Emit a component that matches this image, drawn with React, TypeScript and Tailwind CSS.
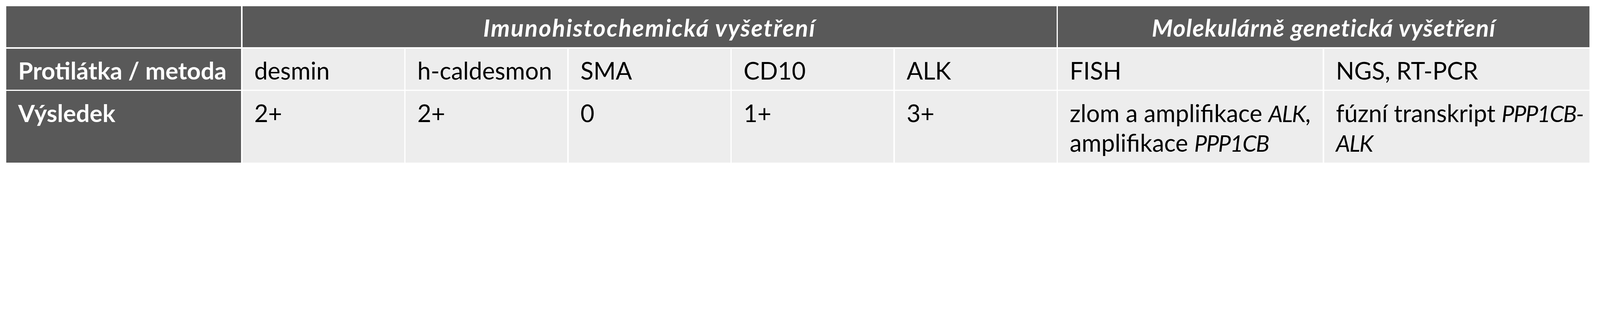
const headCell = "bg-[#595959] text-white font-bold italic text-center pt-[17px] whitespace-nowrap";
const labelCell = "bg-[#595959] text-white font-bold pl-[30px] pt-[18.4px] whitespace-nowrap";
const cell = "bg-[#ededed] text-black pl-[30px] pt-[18.4px] whitespace-nowrap";
// gene names are set in a narrower italic
const gene = "italic text-[58px] tracking-[-2px]";

const antibodies = ["desmin", "h-caldesmon", "SMA", "CD10", "ALK"];
const results = ["2+", "2+", "0", "1+", "3+"];

export default function App() {
  return (
    <div className="bg-white pl-[16.4px] pt-[16.4px] pb-[6px]">
      <div className="grid w-[4053px] grid-cols-[601px_414px_414px_414px_414px_414px_678px_679.5px] grid-rows-[105px_105.5px_184px] gap-x-[3.5px] gap-y-[3.2px] font-['Lato',sans-serif] text-[61.5px] leading-[74.7px]">
        {/* header row */}
        <div className="bg-[#595959]" />
        <div className={`col-span-5 tracking-[2.4px] ${headCell}`}>Imunohistochemická vyšetření</div>
        <div className={`col-span-2 tracking-[1.4px] ${headCell}`}>Molekulárně genetická vyšetření</div>

        {/* antibody / method row */}
        <div className={labelCell}>Protilátka / metoda</div>
        {antibodies.map((a) => (
          <div key={a} className={cell}>
            {a}
          </div>
        ))}
        <div className={cell}>FISH</div>
        <div className={cell}>NGS, RT-PCR</div>

        {/* result row */}
        <div className={labelCell}>Výsledek</div>
        {results.map((r, i) => (
          <div key={i} className={cell}>
            {r}
          </div>
        ))}
        <div className={cell}>
          zlom a amplifikace <span className={gene}>ALK</span>,<br />
          amplifikace <span className={gene}>PPP1CB</span>
        </div>
        <div className={cell}>
          fúzní transkript <span className={gene}>PPP1CB-</span>
          <br />
          <span className={gene}>ALK</span>
        </div>
      </div>
    </div>
  );
}
